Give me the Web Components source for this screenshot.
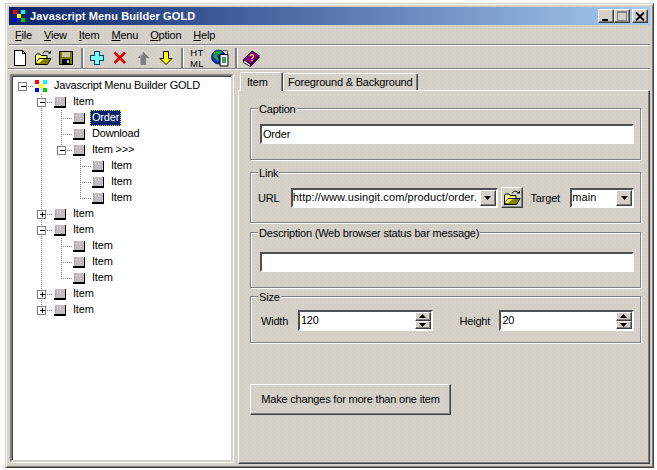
<!DOCTYPE html>
<html lang="en"><head><meta charset="utf-8"><title>Javascript Menu Builder GOLD</title>
<style>
html,body{margin:0;padding:0;background:#fff}
body{width:657px;height:470px;overflow:hidden;font:11px "Liberation Sans",Arial,sans-serif;letter-spacing:-.2px;color:#000;
--tex:radial-gradient(circle at .5px .5px,#cbc7bf .4px,transparent .45px),radial-gradient(circle at 2.5px 2.5px,#cbc7bf .4px,transparent .45px);--face:#d6d2ca}
</style></head><body>
<script>
const ICONS={
new:`<svg width="16" height="16" viewBox="0 0 16 16" shape-rendering="crispEdges"><path d="M2.500 .5H10.500L13.500 3.500V15.500H2.500Z" fill="#fff" stroke="#000"/><path d="M10.500 .5V3.500H13.500" fill="none" stroke="#000"/></svg>`,
open:`<svg width="18" height="16" viewBox="0 0 18 16"><path d="M1.500 14.500V5.500L2.500 4H6L7 5.500H13V8" fill="#ffff80" stroke="#000"/><path d="M1.500 14.500H13.500L17 8.500H5Z" fill="#808000" stroke="#000"/><path d="M2 13L5 9H10L5 13Z" fill="#ffff66"/><path d="M9 3.500C10 1 13 .5 15 2.500" fill="none" stroke="#000"/><path d="M13.500 3.500H17V0.500Z" fill="#000"/></svg>`,
save:`<svg width="16" height="16" viewBox="0 0 16 16" shape-rendering="crispEdges"><rect x="1" y="1" width="14" height="14" fill="#000"/><rect x="2" y="2" width="12" height="12" fill="#808000"/><rect x="4" y="2" width="8" height="5" fill="#c8c8a0"/><rect x="4" y="9" width="8" height="5" fill="#000"/><rect x="9" y="10" width="2" height="3" fill="#c8c8a0"/></svg>`,
plus:`<svg width="16" height="16" viewBox="0 0 16 16" shape-rendering="crispEdges"><path d="M5.500 1.500H10.500V5.500H14.500V10.500H10.500V14.500H5.500V10.500H1.500V5.500H5.500Z" fill="#7ff" stroke="#004060"/></svg>`,
del:`<svg width="16" height="16" viewBox="0 0 16 16"><path d="M2.500 2.500L13 13M13 2.500L2.500 13" stroke="#e00000" stroke-width="2.600"/><path d="M3 2L13.500 12.500" stroke="#800000" stroke-width=".6"/></svg>`,
up:`<svg width="16" height="16" viewBox="0 0 16 16" shape-rendering="crispEdges"><path d="M8 2L14 8H11V15H5V8H2Z" fill="#808080"/><path d="M8 2L5 5V15H6V6L8 4Z" fill="#a8a8a8"/></svg>`,
down:`<svg width="16" height="16" viewBox="0 0 16 16"><path d="M5.500 1.500H10.500V8.500H14L8 14.500L2 8.500H5.500Z" fill="#ff0" stroke="#000"/></svg>`,
globe:`<svg width="18" height="18" viewBox="0 0 18 18"><circle cx="7.500" cy="8" r="7" fill="#0a2fb0" stroke="#001060" stroke-width=".7"/><path d="M3 3.500C5 1.500 9 1 11 3L9 5.500L7 5L6 7.500L8 10L6.500 13L4.500 10L2 8Z" fill="#20a040"/><path d="M9 5.500h8V17H9Z" fill="#f4f4f4" stroke="#000"/><rect x="11" y="8" width="4" height="6" fill="#40a060"/><path d="M12 1.500L16.500 1.500V5" stroke="#606060" fill="none"/></svg>`,
book:`<svg width="18" height="18" viewBox="0 0 18 18"><path d="M1.500 10.500L10 2L17 6.500L8.500 15.500Z" fill="#900090" stroke="#200020"/><path d="M1.500 10.500V13.500L8.500 17.500V15.500Z" fill="#fff" stroke="#200020"/><path d="M8.500 17.500L17 8.500V6.500L8.500 15.500Z" fill="#600060" stroke="#200020"/><path d="M8 7C9 5 12 5.500 11.500 7.500C11 9 10 8.500 10 10" fill="none" stroke="#ff0" stroke-width="1.200"/><rect x="9.200" y="10.800" width="1.500" height="1.500" fill="#ff0"/></svg>`,
mini:`<svg width="13" height="13" viewBox="0 0 13 13" shape-rendering="crispEdges"><rect x="0" y="0" width="4" height="4" fill="#f00"/><rect x="8" y="0" width="4" height="4" fill="#0ff"/><rect x="4" y="4" width="4" height="4" fill="#ff0"/><rect x="0" y="8" width="4" height="4" fill="#00f"/><rect x="8" y="8" width="4" height="4" fill="#0c0"/></svg>`,
node:`<svg width="13" height="11" viewBox="0 0 13 11" shape-rendering="crispEdges"><rect x="1" y="0" width="10" height="9" fill="#c0bcc0"/><rect x="11" y="0" width="1" height="9" fill="#000"/><rect x="0" y="9" width="12" height="2" fill="#000"/><rect x="3" y="2" width="1" height="1" fill="#eee"/><rect x="6" y="2" width="1" height="1" fill="#eee"/><rect x="1" y="0" width="1" height="9" fill="#a8a4a8"/></svg>`
};
function define(name,css,html){
  customElements.define(name,class extends HTMLElement{
    constructor(){super();this.attachShadow({mode:"open"}).innerHTML=`<style>${css}</style>${typeof html==="function"?"":html}`;}
    connectedCallback(){
      if(typeof html==="function"&&!this._d){this._d=1;this.shadowRoot.innerHTML+=html(this);}
    }
  });
}
const tex=`background-color:var(--face);background-image:var(--tex);background-size:4px 4px`;
define("mb-icon",":host{display:inline-flex;align-items:center;justify-content:center}svg{display:block}",el=>ICONS[el.getAttribute("name")]||"");
define("mb-window",`:host{display:flex;flex-direction:column;box-sizing:border-box;margin:3px 0 0 5px;width:649px;height:465px;padding:2px;
 border:1px solid;border-color:#d4d0c8 #404040 #404040 #d4d0c8;${tex};
 box-shadow:inset 1px 1px #fff,inset -1px -1px #808080}`,"<slot></slot>");
define("mb-titlebar",`:host{display:flex;align-items:center;height:18px;flex:none;margin:1px 1px 0 1px;color:#fff;font-weight:bold;letter-spacing:.12px;
 background:linear-gradient(90deg,#0a246a,#a6caf0)}
 .i{margin:0 4px 0 4px;display:flex}.t{flex:1}.b{display:flex;margin-right:2px}`,
 `<span class="i"><slot name="icon"></slot></span><span class="t"><slot></slot></span><span class="b"><slot name="btn"></slot></span>`);
define("mb-capbutton",`:host{display:block;box-sizing:border-box;width:16px;height:14px;background:#d4d0c8;border:1px solid;border-color:#fff #404040 #404040 #fff;box-shadow:inset -1px -1px #808080}svg{display:block}`,
 el=>{const k=el.getAttribute("kind");
  const p=k==="min"?'<rect x="3" y="9" width="6" height="2" fill="#000"/>':k==="max"?'<path d="M2.500 1.500h9v9h-9z" fill="none" stroke="#808080"/><rect x="2" y="1" width="10" height="2" fill="#808080"/>':'<path d="M3 2.500L11 10.500M11 2.500L3 10.500" stroke="#000" stroke-width="1.800"/>';
  return `<svg width="14" height="12" viewBox="0 0 14 12">${p}</svg>`});
define("mb-menubar",`:host{display:flex;height:20px;flex:none;align-items:center;padding-left:5px;gap:10px;box-sizing:border-box;margin:0 1px;border-bottom:1px solid #808080;box-shadow:0 1px #fff}`,"<slot></slot>");
define("mb-menu",`:host{display:block;padding:0 1px}`,"<slot></slot>");
define("mb-toolbar",`:host{display:flex;height:23px;flex:none;align-items:center;padding:1px 0 0 .5px;box-sizing:border-box;margin:1px 1px 0 0;border-bottom:1px solid #808080;box-shadow:0 1px #fff}`,"<slot></slot>");
define("mb-tool",`:host{display:flex;width:23px;height:21px;align-items:center;justify-content:center}`,"<slot></slot>");
define("mb-toolsep",`:host{display:block;width:2px;height:20px;margin:0 3px;background:#808080;box-shadow:1px 0 #fff}`,"");
define("mb-stack",`:host{display:block;font-size:9.500px;line-height:11px;letter-spacing:.4px;text-align:center}`,"<slot></slot>");
define("mb-main",`:host{display:flex;flex:1;min-height:0;padding:4px 0 1px 2px;gap:5px;margin-right:1px}`,"<slot></slot>");
define("mb-tree",`:host{display:block;box-sizing:border-box;flex:none;width:223px;height:388px;margin-top:1px;padding-top:2px;background:#fff;border:2px solid;border-color:#808080 #d4d0c8 #d4d0c8 #808080;box-shadow:inset 1px 1px #404040,1px 1px #fff}`,"<slot></slot>");
define("mb-row",`:host{display:flex;height:16px;align-items:center}svg{display:block;flex:none}
 .ic{width:16px;flex:none;display:flex;align-items:center;height:16px}
 .l{padding:1px 2px 2px;margin-left:1px;line-height:13px;white-space:nowrap}
 :host([sel]) .l{background:#0a246a;color:#fff;outline:1px dotted #e8d060;outline-offset:-1px}`,
 el=>{
  const L=+el.getAttribute("level"), box=el.getAttribute("box"), pipes=(el.getAttribute("pipes")||"").split(",").filter(Boolean).map(Number), end=el.hasAttribute("end");
  const X0=12, icon=[35,54,73,92][L], cx=[22,41,61,80][L], w=icon-X0;
  const dots=(x1,y1,x2,y2)=>`<line x1="${x1}" y1="${y1}" x2="${x2}" y2="${y2}" stroke="#808080" stroke-dasharray="1 1"/>`;
  let s="";
  pipes.forEach(x=>s+=dots(x+.5,0,x+.5,16));
  if(L>0){ s+=dots(cx+.5,0,cx+.5,end?8:16); }
  s+=dots(cx,8.500,icon-1,8.500);
  if(box){
    s+=`<rect x="${cx-3.500}" y="4.500" width="8" height="8" fill="#fff" stroke="#808080"/><rect x="${cx-1}" y="8" width="5" height="1" fill="#000"/>`;
    if(box==="plus")s+=`<rect x="${cx+1}" y="6" width="1" height="5" fill="#000"/>`;
  }
  return `<svg width="${w}" height="16" viewBox="${X0} 0 ${w} 16" shape-rendering="crispEdges">${s}</svg><span class="ic"><mb-icon name="${L===0?"mini":"node"}"></mb-icon></span><span class="l"><slot></slot></span>`;
 });
define("mb-tabs",`:host{display:flex;flex-direction:column;flex:1;min-width:0;margin:-2px 0 0 0}.s{display:flex;height:19px;align-items:flex-end;padding-left:2px;flex:none;position:relative;z-index:1}
 .p{flex:1;box-sizing:border-box;border:1px solid;border-color:#fff #404040 #404040 #fff;box-shadow:inset -1px -1px #808080;padding:17px 8px 0 11px}`,
 `<div class="s"><slot name="tab"></slot></div><div class="p"><slot></slot></div>`);
define("mb-tab",`:host{display:block;box-sizing:border-box;height:17px;line-height:15px;width:135px;padding:1px 5px 0 4px;border:1px solid;border-bottom:0;border-color:#fff #404040 #fff #fff;box-shadow:inset -1px 0 #808080;border-radius:2px 2px 0 0;white-space:nowrap}
 :host([active]){width:43px;height:19px;margin-bottom:-1px;padding:2px 6px 0 6px;${tex}}`,"<slot></slot>");
define("mb-group",`:host{display:block;box-sizing:border-box;position:relative;border:1px solid #808080;box-shadow:inset 1px 1px #fff,1px 1px #fff;padding:0 6px 0 9px}
 .lg{position:absolute;left:7px;top:-6px;padding:0 1px;line-height:13px;${tex}}`,
 el=>`<span class="lg">${el.getAttribute("legend")}</span><slot></slot>`);
define("mb-input",`:host{display:block;box-sizing:border-box;height:20px;line-height:15px;padding:1px 1px;background:#fff;border:2px solid;border-color:#505050 #fff #fff #505050;white-space:nowrap;overflow:hidden}`,"<slot></slot>");
const arrowBtn=`display:block;box-sizing:border-box;background:#d4d0c8;border:1px solid;border-color:#fff #404040 #404040 #fff;box-shadow:inset -1px -1px #808080`;
define("mb-combo",`:host{display:flex;box-sizing:border-box;height:20px;background:#fff;border:2px solid;border-color:#505050 #fff #fff #505050;align-items:stretch;letter-spacing:.1px}
 .t{flex:1;min-width:0;overflow:hidden;white-space:nowrap;line-height:15px;padding:0}.b{${arrowBtn};width:16px;flex:none;display:flex;align-items:center;justify-content:center}
 svg{display:block}`,
 `<div class="t"><slot></slot></div><div class="b"><svg width="7" height="4" viewBox="0 0 7 4"><path d="M0 0H7L3.500 4Z"/></svg></div>`);
define("mb-spin",`:host{display:flex;box-sizing:border-box;height:21px;background:#fff;border:2px solid;border-color:#505050 #fff #fff #505050;align-items:stretch}
 .t{flex:1;line-height:15px;padding:1px 1px}.c{display:flex;flex-direction:column;width:16px;flex:none}
 .b{${arrowBtn};flex:1;display:flex;align-items:center;justify-content:center}svg{display:block}`,
 `<div class="t"><slot></slot></div><div class="c"><div class="b"><svg width="7" height="4" viewBox="0 0 7 4"><path d="M3.500 0L7 4H0Z"/></svg></div><div class="b"><svg width="7" height="4" viewBox="0 0 7 4"><path d="M0 0H7L3.500 4Z"/></svg></div></div>`);
define("mb-line",`:host{display:flex;align-items:center}`,"<slot></slot>");
define("mb-button",`:host{display:flex;box-sizing:border-box;align-items:center;justify-content:center;padding-bottom:1px;${tex};border:1px solid;border-color:#fff #404040 #404040 #fff;box-shadow:inset -1px -1px #808080}`,"<slot></slot>");
</script>
<mb-window>
 <mb-titlebar><mb-icon slot="icon" name="mini"></mb-icon>Javascript Menu Builder GOLD
  <mb-capbutton slot="btn" kind="min"></mb-capbutton><mb-capbutton slot="btn" kind="max"></mb-capbutton><mb-capbutton slot="btn" kind="close" style="margin-left:2px"></mb-capbutton></mb-titlebar>
 <mb-menubar>
  <mb-menu><u>F</u>ile</mb-menu><mb-menu><u>V</u>iew</mb-menu><mb-menu><u>I</u>tem</mb-menu><mb-menu><u>M</u>enu</mb-menu><mb-menu><u>O</u>ption</mb-menu><mb-menu><u>H</u>elp</mb-menu>
 </mb-menubar>
 <mb-toolbar>
  <mb-tool><mb-icon name="new"></mb-icon></mb-tool><mb-tool><mb-icon name="open"></mb-icon></mb-tool><mb-tool><mb-icon name="save"></mb-icon></mb-tool><mb-toolsep></mb-toolsep>
  <mb-tool><mb-icon name="plus"></mb-icon></mb-tool><mb-tool><mb-icon name="del"></mb-icon></mb-tool><mb-tool><mb-icon name="up"></mb-icon></mb-tool><mb-tool><mb-icon name="down"></mb-icon></mb-tool><mb-toolsep></mb-toolsep>
  <mb-tool><mb-stack>HT<br>ML</mb-stack></mb-tool><mb-tool><mb-icon name="globe"></mb-icon></mb-tool><mb-toolsep></mb-toolsep>
  <mb-tool><mb-icon name="book"></mb-icon></mb-tool>
 </mb-toolbar>
 <mb-main>
  <mb-tree>
   <mb-row level="0" box="minus">Javascript Menu Builder GOLD</mb-row>
   <mb-row level="1" box="minus">Item</mb-row>
   <mb-row level="2" pipes="41" sel>Order</mb-row>
   <mb-row level="2" pipes="41">Download</mb-row>
   <mb-row level="2" pipes="41" box="minus" end>Item &gt;&gt;&gt;</mb-row>
   <mb-row level="3" pipes="41">Item</mb-row>
   <mb-row level="3" pipes="41">Item</mb-row>
   <mb-row level="3" pipes="41" end>Item</mb-row>
   <mb-row level="1" box="plus">Item</mb-row>
   <mb-row level="1" box="minus">Item</mb-row>
   <mb-row level="2" pipes="41">Item</mb-row>
   <mb-row level="2" pipes="41">Item</mb-row>
   <mb-row level="2" pipes="41" end>Item</mb-row>
   <mb-row level="1" box="plus">Item</mb-row>
   <mb-row level="1" box="plus" end>Item</mb-row>
  </mb-tree>
  <mb-tabs>
   <mb-tab slot="tab" active>Item</mb-tab><mb-tab slot="tab">Foreground &amp; Background</mb-tab>
   <mb-group legend="Caption" style="height:52px;padding-top:15px"><mb-input>Order</mb-input></mb-group>
   <mb-group legend="Link" style="height:51px;margin-top:12px;padding-top:14px">
    <mb-line><span style="margin-left:-2px;width:33px">URL</span><mb-combo style="width:208px">http://www.usingit.com/product/order.</mb-combo>
     <mb-button style="width:22px;height:21px;margin:0 8px 0 3px;padding:0"><mb-icon name="open"></mb-icon></mb-button>
     <span style="width:40px">Target</span><mb-combo style="width:64px">main</mb-combo></mb-line>
   </mb-group>
   <mb-group legend="Description (Web browser status bar message)" style="height:56px;margin-top:9px;padding-top:19px"><mb-input>&nbsp;</mb-input></mb-group>
   <mb-group legend="Size" style="height:47px;margin-top:8px;padding-top:13px">
    <mb-line><span style="margin-left:1px;width:37px">Width</span><mb-spin style="width:135px">120</mb-spin><span style="margin-left:27px;width:40px">Height</span><mb-spin style="width:135px">20</mb-spin></mb-line>
   </mb-group>
   <mb-button style="width:201px;height:31px;margin-top:41px">Make changes for more than one item</mb-button>
  </mb-tabs>
 </mb-main>
</mb-window>
</body></html>
